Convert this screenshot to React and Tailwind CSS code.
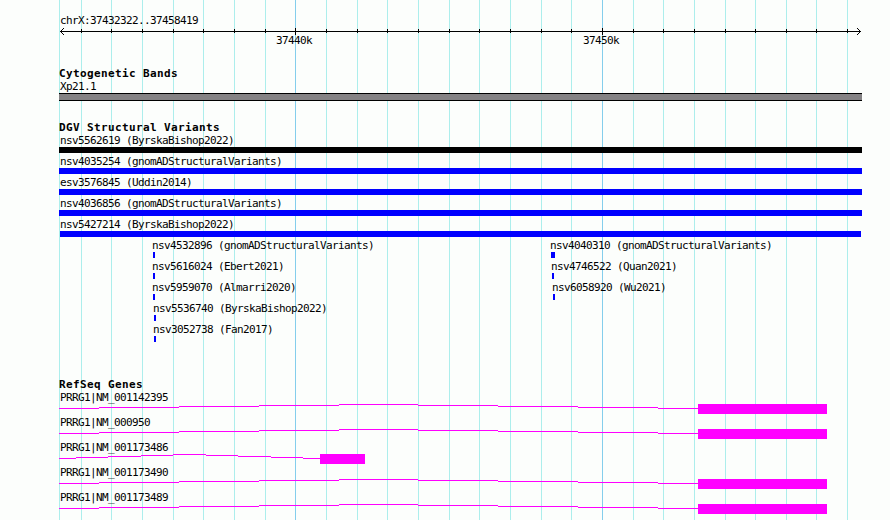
const minorLines = [
  59, 81, 111, 142, 173, 203, 234, 265, 326, 357, 387, 418, 449, 479, 510, 541,
  571, 633, 663, 694, 725, 755, 786, 816, 847,
];
const majorLines = [295, 602];

const wideVariants = [
  { label: "nsv5562619 (ByrskaBishop2022)", bar: "ml-[59px] w-[803px] bg-black" },
  { label: "nsv4035254 (gnomADStructuralVariants)", bar: "ml-[59px] w-[803px] bg-[#0000ff]" },
  { label: "esv3576845 (Uddin2014)", bar: "ml-[59px] w-[803px] bg-[#0000ff]" },
  { label: "nsv4036856 (gnomADStructuralVariants)", bar: "ml-[59px] w-[803px] bg-[#0000ff]" },
  { label: "nsv5427214 (ByrskaBishop2022)", bar: "ml-[60px] w-[801px] bg-[#0000ff]" },
];

const leftVariants = [
  { label: "nsv4532896 (gnomADStructuralVariants)", pad: "pl-[152px]", bar: "w-[2px]" },
  { label: "nsv5616024 (Ebert2021)", pad: "pl-[152px]", bar: "w-[2px]" },
  { label: "nsv5959070 (Almarri2020)", pad: "pl-[152px]", bar: "w-[2px]" },
  { label: "nsv5536740 (ByrskaBishop2022)", pad: "pl-[153px]", bar: "w-[2px]" },
  { label: "nsv3052738 (Fan2017)", pad: "pl-[153px]", bar: "w-[2px]" },
];

const rightVariants = [
  { label: "nsv4040310 (gnomADStructuralVariants)", pad: "pl-[50px]", bar: "w-[4px]" },
  { label: "nsv4746522 (Quan2021)", pad: "pl-[51px]", bar: "w-[2px]" },
  { label: "nsv6058920 (Wu2021)", pad: "pl-[52px]", bar: "w-[2px]" },
];

// Intron segments step up to the middle of the intron and back down.
const longIntron = { steps: [59, 99, 179, 259, 339, 418, 498, 578, 658, 698], exonEnd: 827 };
const shortIntron = { steps: [59, 76, 108, 141, 173, 206, 238, 271, 303, 320], exonEnd: 365 };

const genes = [
  { label: "PRRG1|NM_001142395", shape: longIntron },
  { label: "PRRG1|NM_000950", shape: longIntron },
  { label: "PRRG1|NM_001173486", shape: shortIntron },
  { label: "PRRG1|NM_001173490", shape: longIntron },
  { label: "PRRG1|NM_001173489", shape: longIntron },
];

function Label({ children, className = "" }) {
  return (
    <div className={`h-[15px] text-[11px] leading-[17px] tracking-[-0.622px] whitespace-pre ${className}`}>
      {children}
    </div>
  );
}

function Title({ children }) {
  return (
    <h2 className="h-3 pl-[59px] text-[11px] leading-4 font-bold tracking-[0.378px] whitespace-pre">
      {children}
    </h2>
  );
}

function GridLines() {
  return (
    <svg className="absolute inset-0 -z-10" width="890" height="520" shapeRendering="crispEdges">
      {minorLines.map((x) => (
        <rect key={x} x={x} y="0" width="1" height="520" fill="#aceeec" />
      ))}
      {majorLines.map((x) => (
        <rect key={x} x={x} y="0" width="1" height="520" fill="#84ceec" />
      ))}
    </svg>
  );
}

function Ruler() {
  return (
    <svg className="block" width="890" height="9" shapeRendering="crispEdges" fill="#000000">
      <rect x="60" y="4" width="801" height="1" />
      {minorLines.slice(1).map((x) => (
        <rect key={x} x={x} y="2" width="1" height="4" />
      ))}
      {majorLines.map((x) => (
        <rect key={x} x={x} y="1" width="1" height="7" />
      ))}
      {[1, 2, 3].map((d) => (
        <g key={d}>
          <rect x={60 + d} y={4 - d} width="1" height="1" />
          <rect x={60 + d} y={4 + d} width="1" height="1" />
          <rect x={860 - d} y={4 - d} width="1" height="1" />
          <rect x={860 - d} y={4 + d} width="1" height="1" />
        </g>
      ))}
    </svg>
  );
}

function Variant({ label, pad, bar }) {
  return (
    <div className={pad}>
      <Label>{label}</Label>
      <div className={`ml-px h-1.5 bg-[#0000ff] ${bar}`} />
    </div>
  );
}

function Gene({ label, shape }) {
  const { steps, exonEnd } = shape;
  const exonStart = steps[steps.length - 1];
  return (
    <div className="h-[25px]">
      <Label className="pl-[60px]">{label}</Label>
      <svg className="block" width="890" height="10" shapeRendering="crispEdges" fill="#ff00ff">
        {steps.slice(0, -1).map((x, i) => (
          <rect key={x} x={x} y={Math.abs(i - 4)} width={steps[i + 1] - x} height="1" />
        ))}
        <rect x={exonStart} y="0" width={exonEnd - exonStart} height="10" />
      </svg>
    </div>
  );
}

export default function App() {
  return (
    <main className="relative isolate h-[520px] w-[890px] overflow-hidden bg-[#fcfefc] font-['DejaVu_Sans_Mono',monospace] text-black">
      <GridLines />

      <header className="pt-3">
        <Label className="pl-[60px]">chrX:37432322..37458419</Label>
        <Ruler />
        <div className="-mt-1 flex">
          <Label className="w-[307px] shrink-0 pl-[276px]">37440k</Label>
          <Label className="pl-[276px]">37450k</Label>
        </div>
      </header>

      <section className="mt-[19px]">
        <Title>Cytogenetic Bands</Title>
        <Label className="pl-[60px]">Xp21.1</Label>
        <div className="ml-[59px] h-2 w-[803px] border-y border-black bg-[#848284]" />
      </section>

      <section className="mt-[19px]">
        <Title>DGV Structural Variants</Title>
        {wideVariants.map(({ label, bar }) => (
          <div key={label}>
            <Label className="pl-[60px]">{label}</Label>
            <div className={`h-1.5 ${bar}`} />
          </div>
        ))}
        <div className="flex">
          <div className="w-[500px]">
            {leftVariants.map((v) => (
              <Variant key={v.label} {...v} />
            ))}
          </div>
          <div>
            {rightVariants.map((v) => (
              <Variant key={v.label} {...v} />
            ))}
          </div>
        </div>
      </section>

      <section className="mt-[35px]">
        <Title>RefSeq Genes</Title>
        {genes.map((g) => (
          <Gene key={g.label} {...g} />
        ))}
      </section>
    </main>
  );
}
